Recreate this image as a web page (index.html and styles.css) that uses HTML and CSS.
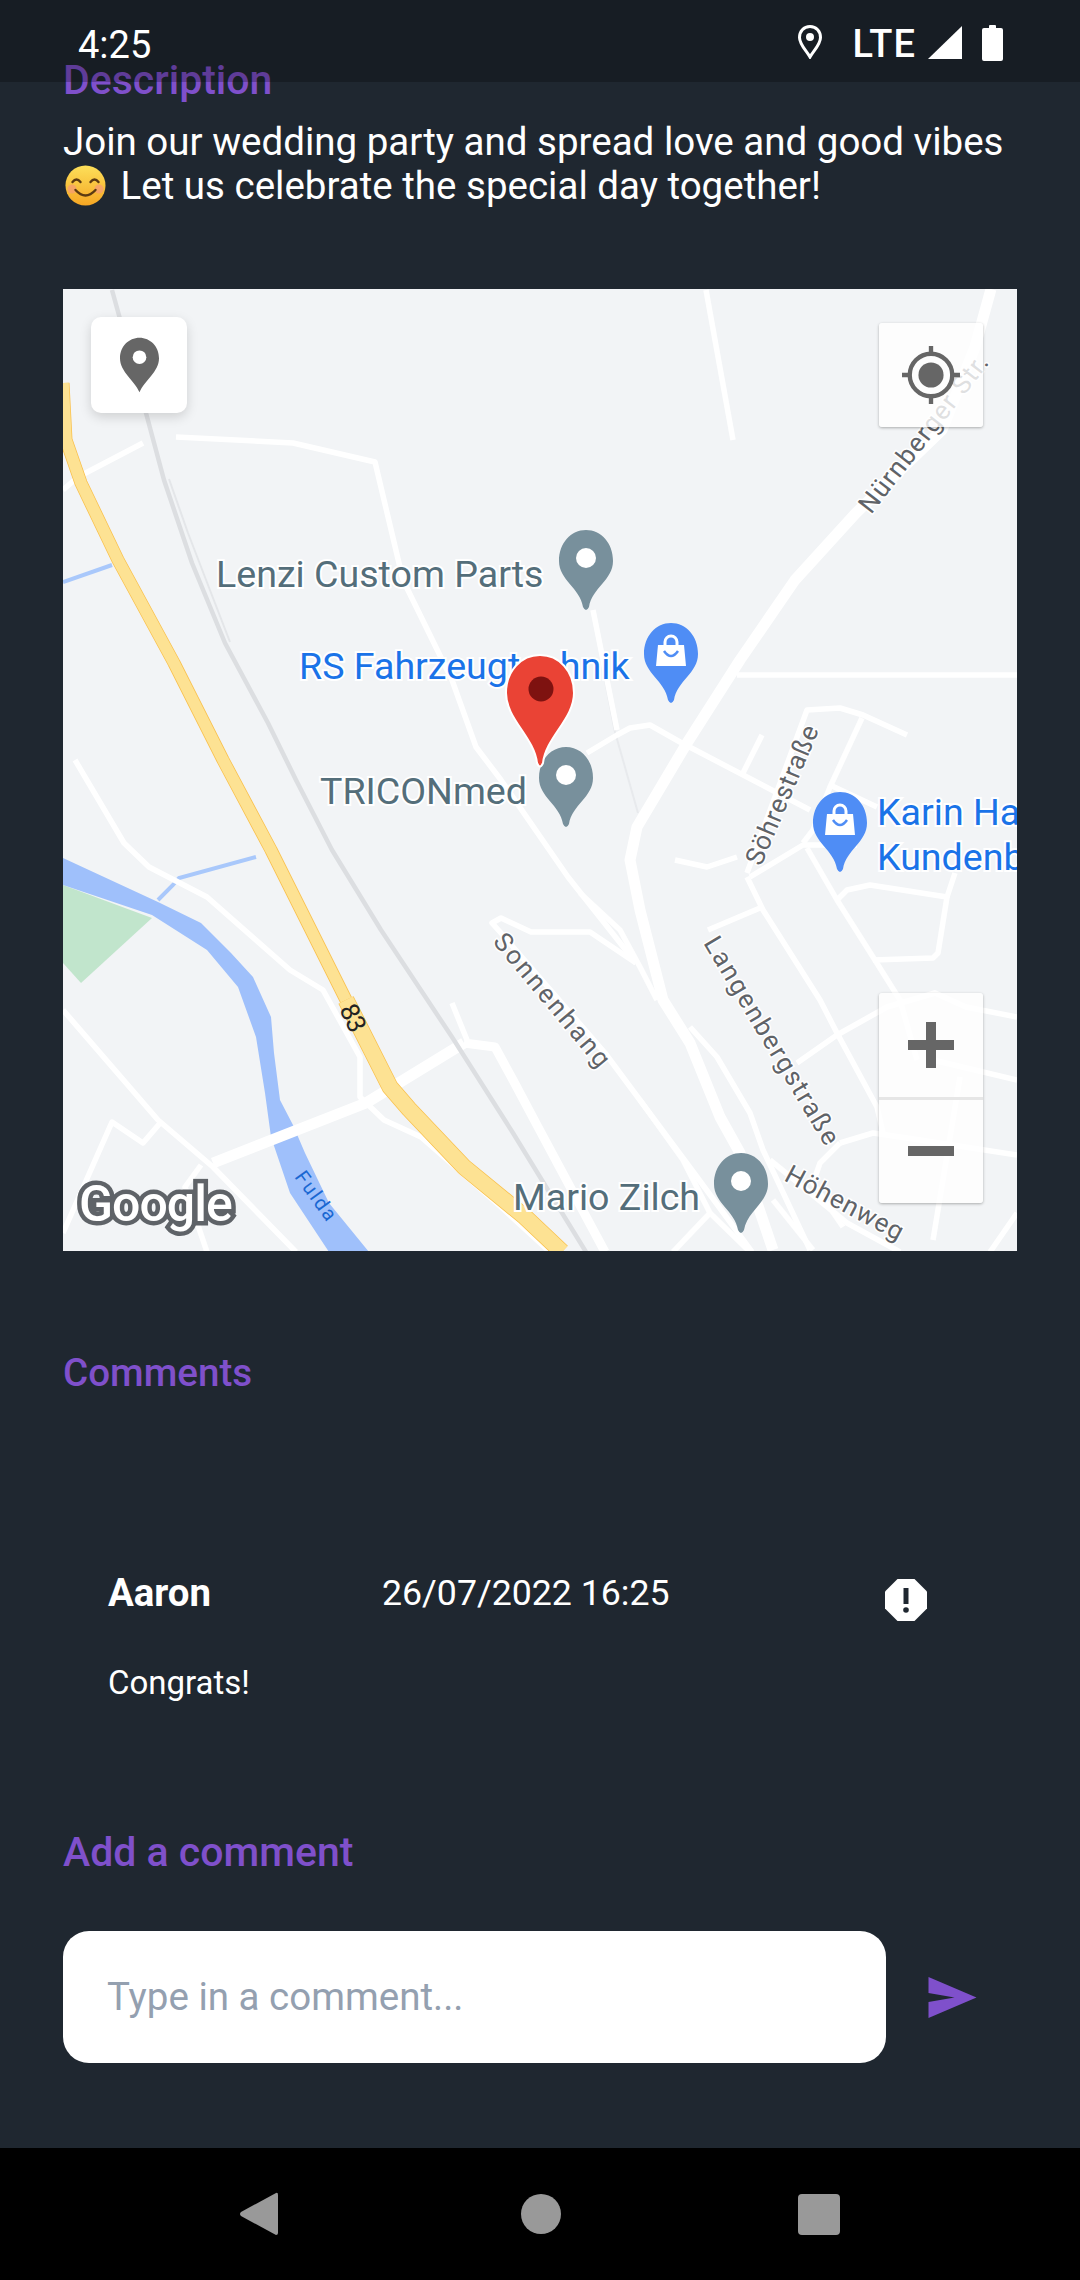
FILE: index.html
```html
<!DOCTYPE html>
<html lang="en">

<head>
    <meta charset="UTF-8">
    <meta name="viewport" content="width=device-width, initial-scale=1.0">
    <title>Event details</title>
    <link rel="stylesheet" href="styles.css">
</head>

<body>
    <div class="status-bar">
        <span class="status-time">4:25</span>
        <div class="status-icons">
            <svg class="status-pin" viewBox="0 0 24 34"><path d="M12 1.500C5.600 1.500 1.500 6.400 1.500 12.400c0 7 7 13.400 10.500 19.600 3.500-6.200 10.500-12.600 10.500-19.600C22.500 6.400 18.400 1.500 12 1.500z" fill="none" stroke="#fff" stroke-width="3"/><circle cx="12" cy="12" r="4" fill="#fff"/></svg>
            <span class="status-lte">LTE</span>
            <svg class="status-signal" viewBox="0 0 34 33"><path d="M34 0V33H0z" fill="#fff"/></svg>
            <svg class="status-battery" viewBox="0 0 21 36"><path d="M7 3V1q0-1 1-1h5q1 0 1 1v2h5q2 0 2 2V34q0 2-2 2H2q-2 0-2-2V5q0-2 2-2z" fill="#fff"/></svg>
        </div>
    </div>

    <main class="content">
        <h2 class="section-title title-description">Description</h2>
        <p class="description">Join our wedding party and spread love and good vibes<br>
            <svg class="emoji" viewBox="0 0 41 41">
                <defs>
                    <linearGradient id="emojiFace" x1="0" y1="0" x2="0" y2="1">
                        <stop offset="0" stop-color="#fde05a"/>
                        <stop offset="1" stop-color="#f5a623"/>
                    </linearGradient>
                </defs>
                <circle cx="20.500" cy="20.500" r="20" fill="url(#emojiFace)"/>
                <circle cx="7" cy="24" r="4.500" fill="#f59a76" opacity="0.7"/>
                <circle cx="34" cy="24" r="4.500" fill="#f59a76" opacity="0.7"/>
                <path d="M7.500 17q4-5 8 0M25.500 17q4-5 8 0M10.500 25q10 11 20 0" fill="none" stroke="#5b3a12" stroke-width="2.400" stroke-linecap="round"/>
            </svg>
            Let us celebrate the special day together!</p>

        <div class="map">
            <svg class="map-canvas" viewBox="0 0 954 962">
                <defs>
                    <path id="pinShape" d="M0 0C-15 0-27 13-27 31-27 50-6 58-3 77Q0 83 3 77C6 58 27 50 27 31 27 13 15 0 0 0z"/>
                    <g id="poiGrey">
                        <use href="#pinShape" fill="#78909c"/>
                        <circle cx="0" cy="28" r="10" fill="#fff"/>
                    </g>
                    <g id="poiShop">
                        <use href="#pinShape" fill="#4f8df5"/>
                        <path d="M-6 23V19A6 6 0 0 1 6 19V23" fill="none" stroke="#fff" stroke-width="3"/>
                        <path d="M-13 22H13L15 43H-15z" fill="#fff"/>
                        <path d="M-7 28Q0 38 7 28" fill="none" stroke="#4f8df5" stroke-width="2.500"/>
                    </g>
                </defs>

                <polygon class="park" points="0,596 89,629 18,694 0,674"/>
                <polyline class="creek" points="95,611 110,596 116,589 193,568"/>
                <polyline class="creek" points="0,293 49,276"/>
                <polygon class="river" points="0,569 95,613 138,634 168,664 190,688 208,728 211,764 217,811 230,836 242,864 266,914 306,963 266,963 227,904 208,848 202,804 193,748 175,698 144,661 89,626 0,596"/>

                <polyline class="road-thin" points="542,391 552,443 575,524"/>
                <polyline class="road" points="643,1 670,151"/>
                <polyline class="road" points="113,148 230,154 312,173 340,291 389,391 413,458 438,491 505,588 573,674"/>
                <polyline class="road" points="80,154 15,188 0,201"/>
                <polyline class="road" points="530,321 554,441"/>
                <polyline class="road" points="674,386 954,386"/>
                <polyline class="road" points="524,464 554,446 567,439 587,436 617,453 747,521"/>
                <polyline class="road" points="680,484 699,446"/>
                <polyline class="road" points="684,584 744,421 777,419 800,426 844,446"/>
                <polyline class="road" points="799,429 767,498 750,541 740,554"/>
                <polyline class="road" points="767,496 814,518"/>
                <polyline class="road" points="687,588 740,556 794,556"/>
                <polyline class="road" points="612,571 644,578 674,568"/>
                <polyline class="road" points="684,588 700,621 757,711 774,744 814,818 820,844"/>
                <polyline class="road" points="744,559 774,611 810,668 837,711 854,771"/>
                <polyline class="road" points="774,611 784,601 807,596 884,608 875,664 870,669 810,671"/>
                <polyline class="road" points="884,608 892,584"/>
                <polyline class="road" points="645,641 697,619"/>
                <polyline class="road" points="12,471 61,554 86,578 144,608 227,681 260,701 297,768 297,808 321,831 358,848 438,918 487,963"/>
                <polyline class="road" points="0,721 95,831 150,878 233,963"/>
                <polyline class="road" points="389,714 404,751"/>
                <polyline class="road" points="0,944 49,833 80,854 98,833"/>
                <polyline class="road" points="138,876 122,898 144,963"/>
                <polyline class="road" points="573,674 527,643 468,643 438,629 429,634 438,644 542,764 634,888 689,963"/>
                <polyline class="road" points="517,604 557,641 577,678 594,711"/>
                <polyline class="road" points="627,738 654,768 687,824 700,861 747,961"/>
                <polyline class="road" points="577,811 620,871 647,924 687,963"/>
                <polyline class="road" points="647,924 610,963"/>
                <polyline class="road" points="707,871 784,934 837,963"/>
                <polyline class="road" points="710,911 750,961"/>
                <polyline class="road" points="734,774 774,746 824,718 872,704 903,718 954,728"/>
                <polyline class="road" points="777,854 810,844 844,849 954,866"/>
                <polyline class="road" points="777,854 757,874 750,894 780,938"/>
                <polyline class="road" points="897,788 870,951"/>
                <polyline class="road" points="870,771 954,791"/>
                <polyline class="road" points="954,924 927,963"/>
                <polyline class="road road-mid" points="401,754 432,758 450,791 475,838 542,963"/>
                <polyline class="road road-wide" points="150,874 303,814 401,754"/>
                <polyline class="road road-main" points="928,0 912,58 879,141 793,224 732,291 677,371 624,454 574,538 567,571 577,621 600,711 627,754 657,828 677,864 710,961"/>

                <polyline class="rail" points="49,1 83,124 101,191 129,274 162,354 205,434 233,491 269,561 318,641 389,748 450,844 523,963"/>
                <polyline class="rail rail-branch" points="101,191 120,245 145,310 162,354"/>
                <polyline class="motorway-edge" points="0,94 3,151 18,194 55,271 111,374 160,471 208,561 283,711"/>
                <polyline class="motorway" points="0,94 3,151 18,194 55,271 111,374 160,471 208,561 283,711"/>
                <polyline class="motorway-edge motorway-low" points="283,711 327,798 346,820 401,878 462,928 499,963"/>
                <polyline class="motorway motorway-low" points="283,711 327,798 346,820 401,878 462,928 499,963"/>

                <text class="road-label" transform="translate(808 226) rotate(-52)" textLength="193">Nürnberger Str.</text>
                <text class="road-label" transform="translate(698 578) rotate(-67)" textLength="149">Söhrestraße</text>
                <text class="road-label" transform="translate(429 653) rotate(50)" textLength="166">Sonnenhang</text>
                <text class="road-label" transform="translate(640 654) rotate(59)" textLength="238">Langenbergstraße</text>
                <text class="road-label" transform="translate(720 891) rotate(28)" textLength="130">Höhenweg</text>
                <text class="water-label" transform="translate(231 888) rotate(54)" textLength="56">Fulda</text>
                <text class="shield-label" transform="translate(276 720) rotate(65)">83</text>

                <text class="poi-label poi-grey" x="153" y="298">Lenzi Custom Parts</text>
                <use href="#poiGrey" x="523" y="241"/>
                <text class="poi-label poi-blue" x="236" y="390">RS Fahrzeugtechnik</text>
                <use href="#poiShop" x="608" y="334"/>
                <text class="poi-label poi-grey" x="257" y="515">TRICONmed</text>
                <use href="#poiGrey" x="503" y="458"/>
                <use href="#poiShop" x="777" y="503"/>
                <text class="poi-label poi-blue" x="814" y="536">Karin Ha</text>
                <text class="poi-label poi-blue" x="814" y="581">Kundenb</text>
                <text class="poi-label poi-grey" x="450" y="921">Mario Zilch</text>
                <use href="#poiGrey" x="678" y="864"/>

                <path class="marker" d="M477 366C458 366 443 382 443 404 443 430 471 448 474 474Q477 481 480 474C483 448 511 430 511 404 511 382 496 366 477 366z"/>
                <circle class="marker-dot" cx="478" cy="400" r="12.500"/>

                <text class="google-logo" x="16" y="932">Google</text>
            </svg>

            <div class="map-btn btn-pin">
                <svg class="btn-pin-icon" viewBox="0 0 40 56"><path d="M20 0C9 0 0 9 0 21c0 14 15 23 20 35 5-12 20-21 20-35C40 9 31 0 20 0z" fill="#666"/><circle cx="20" cy="20" r="7" fill="#fff"/></svg>
            </div>
            <div class="map-btn btn-locate">
                <svg class="btn-locate-icon" viewBox="0 0 60 60"><circle cx="30" cy="30" r="22" fill="none" stroke="#666" stroke-width="4.500"/><circle cx="30" cy="30" r="13" fill="#666"/><path d="M30 0V9M30 51V60M0 30H9M51 30H60" stroke="#666" stroke-width="4.500"/></svg>
            </div>
            <div class="map-zoom">
                <div class="zoom-btn"><svg class="zoom-icon" viewBox="0 0 46 46"><path d="M18 0H28V18H46V28H28V46H18V28H0V18H18z" fill="#666"/></svg></div>
                <div class="zoom-btn"><svg class="zoom-icon" viewBox="0 0 46 46"><path d="M0 18H46V28H0z" fill="#666"/></svg></div>
            </div>
        </div>

        <h2 class="section-title title-comments">Comments</h2>
        <div class="comment">
            <div class="comment-head">
                <span class="comment-author">Aaron</span>
                <span class="comment-date">26/07/2022 16:25</span>
                <svg class="comment-report" viewBox="0 0 42 42"><path d="M12.500 0H29.500L42 12.500V29.500L29.500 42H12.500L0 29.500V12.500z" fill="#fff"/><path d="M18.500 9H23.500V25H18.500z" fill="#1f2730"/><circle cx="21" cy="31" r="2.800" fill="#1f2730"/></svg>
            </div>
            <p class="comment-text">Congrats!</p>
        </div>

        <h2 class="section-title title-add">Add a comment</h2>
        <form class="comment-form">
            <input class="comment-input" type="text" placeholder="Type in a comment...">
            <button class="send-btn" type="button">
                <svg class="send-icon" viewBox="0 0 48 41"><path d="M0 0L48 20.500 0 41V25L26 20.500 0 16z" fill="#7f50cb"/></svg>
            </button>
        </form>
    </main>

    <div class="nav-bar">
        <svg class="nav-back" viewBox="0 0 38 44"><path d="M36 1q2-1 2 2V41q0 2-2 2L1 24q-2-2 0-4z" fill="#999"/></svg>
        <span class="nav-home"></span>
        <span class="nav-recent"></span>
    </div>
</body>

</html>
```

FILE: styles.css
```css
* {
    box-sizing: border-box;
}

body {
    font-family: 'Roboto', sans-serif;
    background-color: #1f2730;
    color: #fff;
    margin: 0;
    padding: 0;
    width: 1080px;
    height: 2280px;
    display: flex;
    flex-direction: column;
    overflow: hidden;
    position: relative;
}

/* status bar is translucent and lies over the scrolled content */
.status-bar {
    position: absolute;
    top: 0;
    left: 0;
    right: 0;
    height: 82px;
    background-color: rgba(0, 0, 0, 0.25);
    display: flex;
    justify-content: space-between;
    padding: 0 77px 0 78px;
}

.status-time {
    font-size: 38px;
    line-height: 42px;
    margin-top: 24px;
}

.status-icons {
    display: flex;
    align-items: flex-start;
    padding-top: 25px;
}

.status-pin {
    width: 24px;
    height: 34px;
    margin-right: 30px;
}

.status-lte {
    font-size: 38px;
    font-weight: 500;
    line-height: 38px;
    letter-spacing: 1px;
    margin-right: 12px;
}

.status-signal {
    width: 34px;
    height: 33px;
    margin-top: 1px;
    margin-right: 20px;
}

.status-battery {
    width: 21px;
    height: 36px;
}

.content {
    flex: 1;
    padding: 58px 63px 0;
    min-height: 0;
}

.section-title {
    margin: 0;
    color: #7f50cb;
    font-size: 41px;
    font-weight: 500;
    line-height: 44px;
}

.description {
    margin: 18px 0 0;
    font-size: 38.500px;
    line-height: 44px;
}

.emoji {
    width: 41px;
    height: 41px;
    vertical-align: -7px;
    margin-left: 2px;
    margin-right: 5px;
}

.map {
    position: relative;
    width: 954px;
    height: 962px;
    margin-top: 81px;
    overflow: hidden;
    background-color: #f2f4f6;
}

.map-canvas {
    display: block;
    width: 954px;
    height: 962px;
}

.park {
    fill: #c1e5cc;
}

.river {
    fill: #9fc0fb;
}

.creek {
    fill: none;
    stroke: #a9c8fb;
    stroke-width: 4;
}

.road,
.road-thin,
.rail,
.motorway,
.motorway-edge {
    fill: none;
    stroke-linejoin: round;
}

.road {
    stroke: #fff;
    stroke-width: 5.500;
}

.road-thin {
    stroke: #e8eaed;
    stroke-width: 2;
}

.road-mid {
    stroke-width: 9;
}

.road-wide {
    stroke-width: 11;
}

.road-main {
    stroke-width: 11;
}

.rail {
    stroke: #dcdee1;
    stroke-width: 4.500;
}

.rail-branch {
    stroke: #e4e6e9;
    stroke-width: 2;
    transform: translate(5px, -1px);
}

.motorway-edge {
    stroke: #f9c04d;
    stroke-width: 13;
}

.motorway {
    stroke: #fde293;
    stroke-width: 11.500;
}

.motorway-edge.motorway-low {
    stroke-width: 17;
}

.motorway.motorway-low {
    stroke-width: 15.500;
}

.road-label {
    font-size: 26px;
    fill: #5f6368;
    stroke: #fff;
    stroke-width: 3px;
    paint-order: stroke;
}

.water-label {
    font-size: 20px;
    fill: #1967d2;
}

.shield-label {
    font-size: 26px;
    letter-spacing: -1px;
    fill: #222;
}

.poi-label {
    font-size: 37.600px;
    stroke: #fff;
    stroke-width: 4px;
    paint-order: stroke;
}

.poi-grey {
    fill: #546e7a;
}

.poi-blue {
    fill: #1a73e8;
}

.marker {
    fill: #ea4335;
    stroke: #fff;
    stroke-width: 2;
}

.marker-dot {
    fill: #7e1210;
}

.google-logo {
    font-size: 50px;
    font-weight: 500;
    letter-spacing: -1px;
    fill: #fff;
    stroke: #5f6368;
    stroke-width: 9px;
    paint-order: stroke;
}

.map-btn {
    position: absolute;
    display: flex;
    align-items: center;
    justify-content: center;
}

.btn-pin {
    left: 28px;
    top: 28px;
    width: 96px;
    height: 96px;
    background-color: #fff;
    border-radius: 10px;
    box-shadow: 0 4px 12px rgba(0, 0, 0, 0.15);
}

.btn-pin-icon {
    width: 39px;
    height: 56px;
}

.btn-locate {
    left: 816px;
    top: 34px;
    width: 104px;
    height: 104px;
    background-color: rgba(255, 255, 255, 0.8);
    border-radius: 3px;
    box-shadow: 0 1px 3px rgba(0, 0, 0, 0.3);
}

.btn-locate-icon {
    width: 58px;
    height: 58px;
}

.map-zoom {
    position: absolute;
    left: 816px;
    top: 704px;
    width: 104px;
    height: 210px;
    display: flex;
    flex-direction: column;
    border-radius: 3px;
    overflow: hidden;
    box-shadow: 0 1px 3px rgba(0, 0, 0, 0.3);
}

.zoom-btn {
    flex: 1;
    display: flex;
    align-items: center;
    justify-content: center;
    background-color: rgba(255, 255, 255, 0.8);
}

.zoom-btn:first-child {
    border-bottom: 3px solid #e6e6e6;
}

.zoom-icon {
    width: 46px;
    height: 46px;
}

.title-comments {
    margin-top: 100px;
    font-size: 38.600px;
}

.comment {
    padding-left: 45px;
    margin-top: 176px;
}

.comment-head {
    display: flex;
    align-items: flex-start;
}

.comment-author {
    width: 274px;
    font-size: 38.400px;
    font-weight: 700;
    line-height: 44px;
}

.comment-date {
    width: 503px;
    font-size: 35.700px;
    line-height: 44px;
}

.comment-report {
    width: 42px;
    height: 42px;
    margin-top: 8px;
}

.comment-text {
    margin: 40px 0 0;
    font-size: 33px;
    line-height: 44px;
}

.title-add {
    margin-top: 125px;
}

.comment-form {
    display: flex;
    align-items: center;
    margin-top: 57px;
}

.comment-input {
    width: 823px;
    height: 132px;
    border: none;
    border-radius: 26px;
    background-color: #fff;
    padding: 0 44px 2px;
    font-family: 'Roboto', sans-serif;
    font-size: 38.500px;
    outline: none;
}

.comment-input::placeholder {
    color: #94a0b0;
    opacity: 1;
}

.send-btn {
    border: none;
    background: none;
    padding: 0;
    margin-left: 42px;
    display: flex;
}

.send-icon {
    width: 49px;
    height: 41px;
}

.nav-bar {
    height: 132px;
    background-color: #000;
    flex-shrink: 0;
    position: relative;
    display: flex;
    align-items: center;
    padding-left: 240px;
}

.nav-back {
    width: 38px;
    height: 44px;
}

.nav-home {
    width: 40px;
    height: 40px;
    border-radius: 50%;
    background-color: #999;
    margin-left: 243px;
}

.nav-recent {
    width: 42px;
    height: 41px;
    border-radius: 4px;
    background-color: #999;
    margin-left: 237px;
}
```
